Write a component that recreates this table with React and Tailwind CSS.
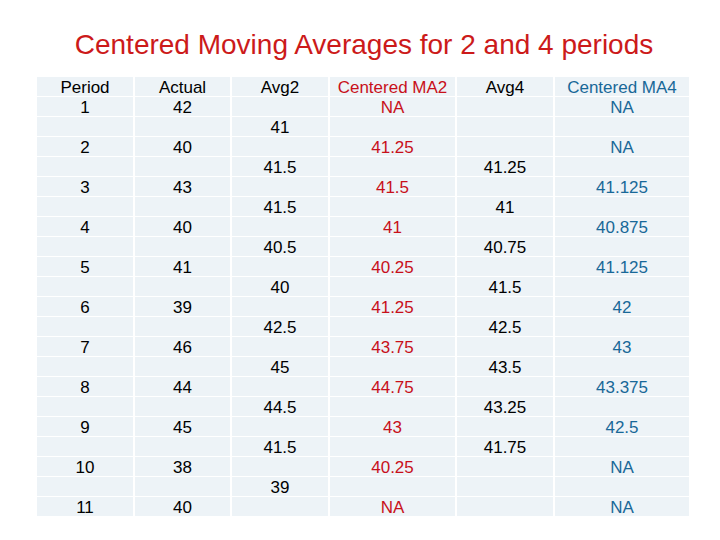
const HEADERS = ['Period', 'Actual', 'Avg2', 'Centered MA2', 'Avg4', 'Centered MA4'];

// each row: [period, actual, avg2, cma2, avg4, cma4]
const ROWS = [
  ['1', '42', '', 'NA', '', 'NA'],
  ['', '', '41', '', '', ''],
  ['2', '40', '', '41.25', '', 'NA'],
  ['', '', '41.5', '', '41.25', ''],
  ['3', '43', '', '41.5', '', '41.125'],
  ['', '', '41.5', '', '41', ''],
  ['4', '40', '', '41', '', '40.875'],
  ['', '', '40.5', '', '40.75', ''],
  ['5', '41', '', '40.25', '', '41.125'],
  ['', '', '40', '', '41.5', ''],
  ['6', '39', '', '41.25', '', '42'],
  ['', '', '42.5', '', '42.5', ''],
  ['7', '46', '', '43.75', '', '43'],
  ['', '', '45', '', '43.5', ''],
  ['8', '44', '', '44.75', '', '43.375'],
  ['', '', '44.5', '', '43.25', ''],
  ['9', '45', '', '43', '', '42.5'],
  ['', '', '41.5', '', '41.75', ''],
  ['10', '38', '', '40.25', '', 'NA'],
  ['', '', '39', '', '', ''],
  ['11', '40', '', 'NA', '', 'NA'],
];

const COLORS = [
  'text-black',
  'text-black',
  'text-black',
  'text-[#c8101a]',
  'text-black',
  'text-[#186898]',
];

function Cell({ value, col }) {
  return (
    <div className={`flex h-[19px] items-center justify-center bg-[#edf3f7] pt-[2px] text-[17px] leading-[19px] ${COLORS[col]}`}>
      {value}
    </div>
  );
}

export default function App() {
  return (
    <div className="h-[540px] w-[720px] bg-white font-['Liberation_Sans',Arial,sans-serif]">
      <h1 className="pl-[8px] pt-[29px] text-center text-[28px] leading-[32px] text-[#cc1a1a]">
        Centered Moving Averages for 2 and 4 periods
      </h1>

      <div className="ml-[37px] mt-[16px] grid w-fit grid-cols-[96px_95px_96px_125px_96px_134px] gap-x-[2px] gap-y-px">
        {HEADERS.map((h, i) => (
          <Cell key={h} value={h} col={i} />
        ))}
        {ROWS.map((row, r) =>
          row.map((v, c) => <Cell key={`${r}-${c}`} value={v} col={c} />)
        )}
      </div>
    </div>
  );
}
